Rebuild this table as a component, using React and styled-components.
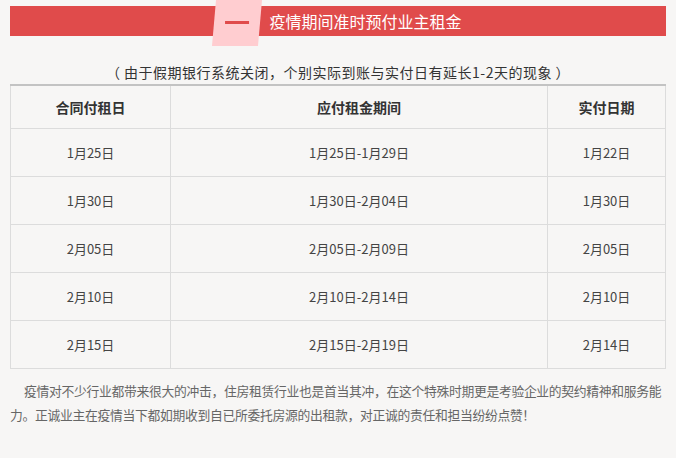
import React from 'react'
import styled, {createGlobalStyle} from 'styled-components'

const rows = [
	['1月25日', '1月25日-1月29日', '1月22日'],
	['1月30日', '1月30日-2月04日', '1月30日'],
	['2月05日', '2月05日-2月09日', '2月05日'],
	['2月10日', '2月10日-2月14日', '2月10日'],
	['2月15日', '2月15日-2月19日', '2月14日'],
]

function App(){
	return (
		<>
			<GlobalStyle />
			<Page>
				<Banner>
					<Badge><Dash /></Badge>
					<BannerTitle>疫情期间准时预付业主租金</BannerTitle>
				</Banner>
				<Note>（ 由于假期银行系统关闭，个别实际到账与实付日有延长1-2天的现象 ）</Note>
				<Table>
					<colgroup>
						<col style={{width: 160}} />
						<col style={{width: 377}} />
						<col />
					</colgroup>
					<thead>
						<tr>
							<Th>合同付租日</Th>
							<Th>应付租金期间</Th>
							<Th>实付日期</Th>
						</tr>
					</thead>
					<tbody>
						{rows.map(r => (
							<tr key={r[0]}>
								{r.map((c, i) => <Td key={i}>{c}</Td>)}
							</tr>
						))}
					</tbody>
				</Table>
				<Text>疫情对不少行业都带来很大的冲击，住房租赁行业也是首当其冲，在这个特殊时期更是考验企业的契约精神和服务能力。正诚业主在疫情当下都如期收到自已所委托房源的出租款，对正诚的责任和担当纷纷点赞！</Text>
			</Page>
		</>
	)
}

export default App

const GlobalStyle = createGlobalStyle`
	body {
		margin: 0;
		background: #f7f6f5;
		font-family: "Noto Sans CJK SC", "Noto Sans", sans-serif;
	}
`
const Page = styled.div`
	padding: 6px 10px 0;
`
const Banner = styled.div`
	height: 30px;
	background: #e04b4b;
	display: flex;
	justify-content: center;
	align-items: center;
	gap: 9px;
`
const Badge = styled.div`
	width: 46px;
	height: 46px;
	align-self: flex-start;
	margin-top: -6px;
	background: #ffcdd0;
	transform: skewX(-5deg);
	display: flex;
	align-items: center;
	justify-content: center;
	padding-bottom: 2px;
	box-sizing: border-box;
`
const Dash = styled.div`
	width: 24px;
	height: 3px;
	background: #e04b4b;
	transform: skewX(5deg);
`
const BannerTitle = styled.div`
	color: #fff;
	font-size: 16px;
	line-height: 30px;
`
const Note = styled.p`
	margin: 26px 0 0;
	text-align: center;
	font-size: 14px;
	line-height: 20px;
	color: #333;
	letter-spacing: 0.5px;
`
const Table = styled.table`
	width: 100%;
	margin-top: 2px;
	border-collapse: collapse;
	table-layout: fixed;
	border-top: 2px solid #c3c3c3;
`
const Th = styled.th`
	height: 42px;
	padding: 0;
	border: 1px solid #dcdcdc;
	border-top: none;
	font-size: 14px;
	font-weight: bold;
	color: #333;
	text-align: center;
`
const Td = styled.td`
	height: 47px;
	padding: 0;
	border: 1px solid #dcdcdc;
	font-size: 13px;
	color: #444;
	text-align: center;
`
const Text = styled.p`
	margin: 10px 0 0;
	font-size: 12.8px;
	letter-spacing: -0.3px;
	line-height: 24px;
	color: #666;
	text-indent: 14px;
`
